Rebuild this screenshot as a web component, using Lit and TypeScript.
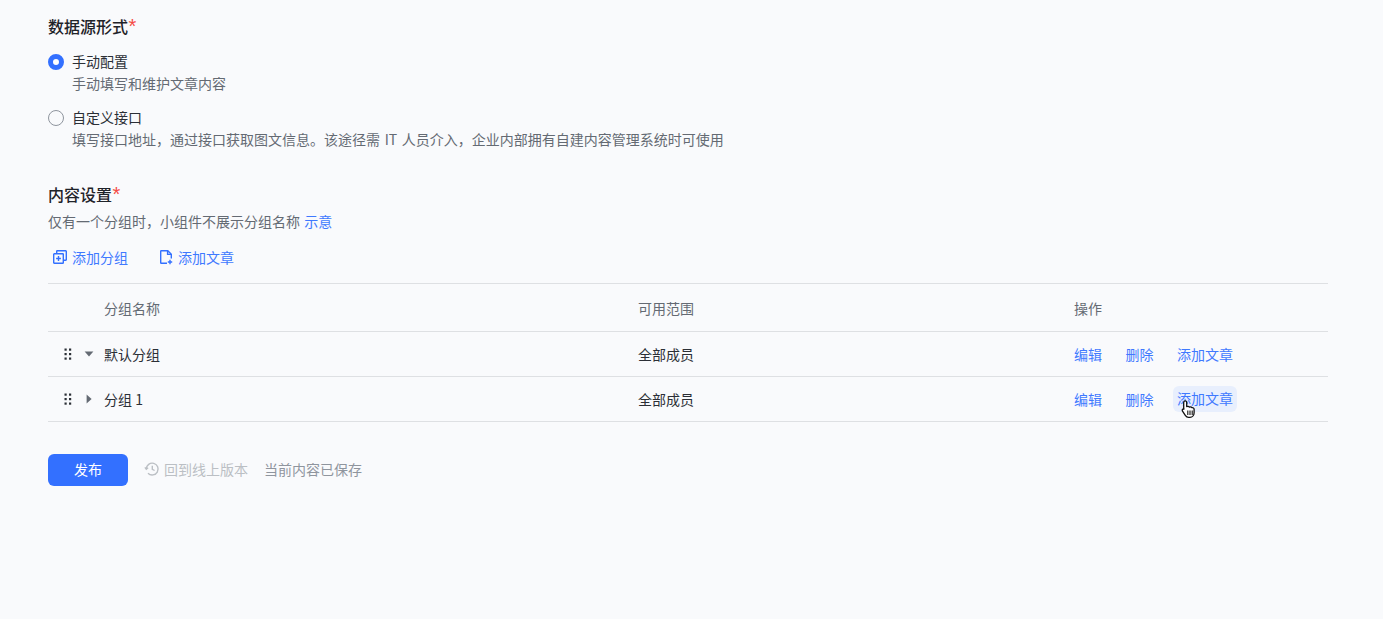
import { LitElement, html, css, svg } from 'lit';
import { customElement } from 'lit/decorators.js';

const rows = [
  { name: '默认分组', open: true, hover: false },
  { name: '分组 1', open: false, hover: true },
];

const dragIcon = svg`<svg class="drag" width="8" height="12" viewBox="0 0 8 12" fill="#2b2f36">
  <rect x="0.5" y="0.5" width="2.2" height="2.2"/><rect x="5" y="0.5" width="2.2" height="2.2"/>
  <rect x="0.5" y="5" width="2.2" height="2.2"/><rect x="5" y="5" width="2.2" height="2.2"/>
  <rect x="0.5" y="9.5" width="2.2" height="2.2"/><rect x="5" y="9.5" width="2.2" height="2.2"/></svg>`;

@customElement('app-root')
export class AppRoot extends LitElement {
  static styles = css`
    :host {
      display: block;
      box-sizing: border-box;
      height: 619px;
      overflow: hidden;
      padding: 15px 55px 0 48px;
      background: #f9fafc;
      color: #2b2f36;
      font-family: "Noto Sans CJK SC", "Noto Sans", sans-serif;
      font-size: 14px;
      line-height: 22px;
    }
    .title {
      color: #1f2329;
      font-size: 16px;
      font-weight: 500;
      line-height: 22px;
    }
    .title i {
      margin-left: 0.5px;
      color: #f54a45;
      font-family: "Liberation Sans", sans-serif;
      font-size: 20px;
      font-style: normal;
      font-weight: 400;
      line-height: 0;
    }
    .radios {
      display: flex;
      flex-direction: column;
      gap: 12px;
      margin-top: 13px;
    }
    .radio {
      display: flex;
      gap: 8px;
    }
    .dot {
      box-sizing: border-box;
      flex: none;
      width: 16px;
      height: 16px;
      margin-top: 4px;
      border: 1px solid #8f959e;
      border-radius: 50%;
    }
    .dot.on {
      border: 5px solid #3370ff;
      background: #fff;
    }
    .desc {
      color: #646a73;
      word-spacing: 1.5px;
    }
    .section {
      margin-top: 33px;
    }
    .hint {
      margin-top: 5px;
      color: #646a73;
      word-spacing: 1px;
    }
    a {
      color: #3f79ff;
    }
    .tools {
      display: flex;
      gap: 30px;
      margin: 14px 0 0 4px;
      color: #3f79ff;
    }
    .tool {
      display: flex;
      align-items: center;
      gap: 4px;
    }
    .table {
      margin-top: 15px;
      border-top: 1px solid #dee0e3;
    }
    .row {
      display: grid;
      grid-template-columns: 582px 436px 1fr;
      align-items: center;
      height: 44px;
      border-bottom: 1px solid #dee0e3;
    }
    .row.head {
      height: 47px;
      color: #646a73;
    }
    .row > div {
      padding-left: 8px;
    }
    .row.head > div:first-child {
      padding-left: 56px;
    }
    .row > div.name {
      display: flex;
      align-items: center;
      padding-left: 16px;
    }
    .drag {
      flex: none;
    }
    .caret {
      flex: none;
      margin: 0 10px 0 12px;
    }
    .ops {
      display: flex;
      color: #3f79ff;
    }
    .ops span {
      margin-right: 23.500px;
    }
    .ops span.hover {
      position: relative;
      margin: -2px 0 -2px -4px;
      padding: 1px 4px;
      border-radius: 6px;
      background: #e8effd;
    }
    .cursor {
      position: absolute;
      left: 8px;
      top: 13px;
    }
    .footer {
      display: flex;
      align-items: center;
      margin-top: 32px;
    }
    .publish {
      width: 80px;
      height: 32px;
      padding: 0 0 2px;
      border: none;
      border-radius: 6px;
      background: #3370ff;
      color: #fff;
      font: inherit;
    }
    .revert {
      display: flex;
      align-items: center;
      gap: 4px;
      margin: -2px 0 0 16px;
      color: #bbbfc4;
    }
    .saved {
      margin: -2px 0 0 16px;
      color: #8f959e;
    }
  `;

  render() {
    return html`
      <div class="title">数据源形式<i>*</i></div>
      <div class="radios">
        <div class="radio">
          <div class="dot on"></div>
          <div>
            <div>手动配置</div>
            <div class="desc">手动填写和维护文章内容</div>
          </div>
        </div>
        <div class="radio">
          <div class="dot"></div>
          <div>
            <div>自定义接口</div>
            <div class="desc">填写接口地址，通过接口获取图文信息。该途径需 IT 人员介入，企业内部拥有自建内容管理系统时可使用</div>
          </div>
        </div>
      </div>

      <div class="section">
        <div class="title">内容设置<i>*</i></div>
        <div class="hint">仅有一个分组时，小组件不展示分组名称 <a>示意</a></div>
        <div class="tools">
          <div class="tool">
            <svg width="16" height="16" viewBox="0 0 16 16" fill="none" stroke="#3370ff" stroke-width="1.4">
              <rect x="1.700" y="4.700" width="9.600" height="9.600" rx="0.6"/>
              <path d="M4.700 4.400V2.300a.6.6 0 0 1 .6-.6h8.400a.6.6 0 0 1 .6.6v8.400a.6.6 0 0 1-.6.6h-2"/>
              <path d="M6.500 7.100v4.800M4.100 9.500h4.800"/>
            </svg>
            添加分组
          </div>
          <div class="tool">
            <svg width="16" height="16" viewBox="0 0 16 16" fill="none" stroke="#3370ff" stroke-width="1.4">
              <path d="M9 14.300H3.300a.6.6 0 0 1-.6-.6V2.300a.6.6 0 0 1 .6-.6h6.500l3.500 3.500v4.400"/>
              <path d="M9.600 1.900v3.500h3.500"/>
              <path d="M12 10.800v4.400M9.800 13h4.400"/>
            </svg>
            添加文章
          </div>
        </div>
        <div class="table">
          <div class="row head">
            <div>分组名称</div>
            <div>可用范围</div>
            <div>操作</div>
          </div>
          ${rows.map((r) => html`
            <div class="row">
              <div class="name">
                ${dragIcon}
                <svg class="caret" width="10" height="10" viewBox="0 0 10 10" fill="#646a73">
                  ${r.open
                    ? svg`<path d="M.6 2.600h8.800L5 7.600z"/>`
                    : svg`<path d="M2.600.6L7.600 5 2.600 9.400z"/>`}
                </svg>
                <span>${r.name}</span>
              </div>
              <div>全部成员</div>
              <div class="ops">
                <span>编辑</span>
                <span>删除</span>
                <span class=${r.hover ? 'hover' : ''}>添加文章${r.hover ? html`
                  <svg class="cursor" width="16" height="21" viewBox="0 0 16 20">
                    <path d="M4.200 1.400c.9 0 1.500.7 1.500 1.500v4.200c1.200-.5 2.300-.2 2.800.5 1-.4 2-.1 2.400.6 1.100-.2 2.200.4 2.200 1.600v3.400c0 2.400-1.600 4.600-4.200 4.600H7.600c-1.500 0-2.500-.7-3.300-1.900L1.500 11.600c-.5-.8-.3-1.700.4-2.100.7-.4 1.400-.2 1 .1L2.700 9.700V2.900c0-.8.600-1.500 1.500-1.500z" fill="#fff" stroke="#111" stroke-width="1.300" stroke-linejoin="round"/>
                    <path d="M6.800 11v4.500M9 11v4.500M11.200 11v4.500" stroke="#111" stroke-width="1.100" fill="none"/>
                  </svg>` : ''}</span>
              </div>
            </div>
          `)}
        </div>
      </div>

      <div class="footer">
        <button class="publish">发布</button>
        <div class="revert">
          <svg width="16" height="16" viewBox="0 0 16 16" fill="none" stroke="#bbbfc4" stroke-width="1.400">
            <path d="M2.300 8a5.900 5.900 0 1 1 1.700 4.200"/>
            <path d="M.9 6.400l1.400 1.800 1.800-1.400"/>
            <path d="M8.300 4.800v3.500l2.300 1.200"/>
          </svg>
          回到线上版本
        </div>
        <div class="saved">当前内容已保存</div>
      </div>
    `;
  }
}
